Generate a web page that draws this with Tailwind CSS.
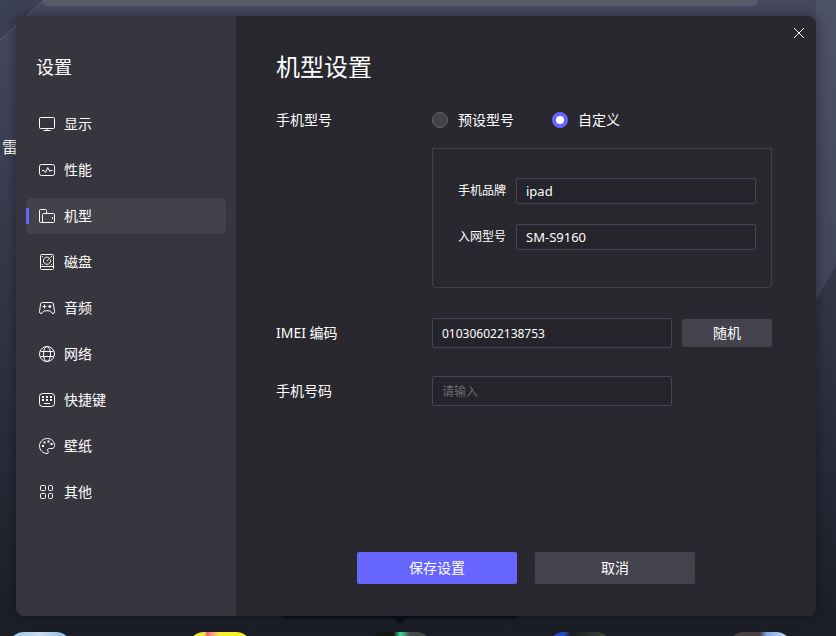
<!DOCTYPE html>
<html lang="zh-CN">
<head>
    <meta charset="UTF-8">
    <meta name="viewport" content="width=device-width, initial-scale=1.0">
    <title>机型设置</title>
    <script src="https://cdn.jsdelivr.net/npm/@tailwindcss/browser@4"></script>
</head>
<body class="relative min-h-screen flex overflow-hidden bg-linear-to-b from-[#474b60] via-[#2c3040] via-60% to-[#1b1e27] font-['Noto_Sans','Noto_Sans_CJK_SC',sans-serif] text-sm text-white">

    <!-- Desktop behind the dialog -->
    <div class="absolute inset-0 overflow-hidden" aria-hidden="true">
        <svg class="absolute left-0 top-0" width="44" height="40" viewBox="0 0 44 40" fill="none">
            <path d="M0 0H44L0 40Z" fill="#363a4d" fill-opacity=".6"/>
            <path d="M44 0L0 40" stroke="#5a5e72"/>
        </svg>
        <svg class="absolute right-0 top-0 h-full" width="20" viewBox="0 0 20 636" preserveAspectRatio="none">
            <path d="M20 0V265L0 300V0Z" fill="#5a5f76" fill-opacity=".4"/>
        </svg>
        <div class="absolute left-[42px] right-[78px] top-0 h-[6px] rounded-b-lg bg-[#595d6b]"></div>
        <span class="absolute left-[2px] top-[135px] text-base leading-6">雷</span>
        <div class="absolute left-[280px] right-[316px] bottom-[17px] h-6 rounded-lg bg-[#101116]"></div>
        <div class="absolute left-[394px] bottom-[13px] h-2 w-3 rounded-b-full bg-[#101116]"></div>
        <div class="absolute -bottom-[60px] left-2 right-11 flex justify-between">
            <div class="size-16 rounded-2xl bg-linear-to-r from-[#8fc4e6] via-[#c9dcf3] to-[#7fb2e4]"></div>
            <div class="size-16 rounded-2xl bg-linear-to-r from-[#f5ee38] from-25% via-[#f0607a] via-30% to-[#f7f12a] to-50%"></div>
            <div class="size-16 rounded-2xl bg-linear-to-r from-[#14170f] from-40% via-[#12e29a] via-50% to-[#45484a] to-65%"></div>
            <div class="size-16 rounded-2xl bg-linear-to-r from-[#1c50c4] from-25% via-[#1c1c22] via-35% to-[#3a4a3a]"></div>
            <div class="size-16 rounded-2xl bg-linear-to-r from-[#4a3f43] from-50% via-[#79a7e8] via-60% to-[#dfe8f5]"></div>
        </div>
    </div>

    <div role="dialog" aria-labelledby="page-title" class="relative flex flex-1 ml-4 mr-5 mt-4 mb-5 min-h-[600px] rounded-lg overflow-hidden shadow-[0_0_14px_rgba(0,0,0,0.4)]">

        <!-- Sidebar -->
        <aside class="w-[220px] shrink-0 bg-[#37363e] pt-9 px-[10px]">
            <h2 class="pl-[10px] text-lg leading-[30px]">设置</h2>
            <nav class="mt-6 flex flex-col gap-[10px]">
                <a href="#" class="flex items-center gap-2 h-9 pl-3 rounded-md">
                    <svg class="size-[18px]" viewBox="0 0 18 18" fill="none" stroke="currentColor">
                        <rect x="1.5" y="2.5" width="15" height="11" rx="1"/>
                        <path d="M9 13.5V15.5M5.5 15.5H12.5"/>
                    </svg>
                    显示
                </a>
                <a href="#" class="flex items-center gap-2 h-9 pl-3 rounded-md">
                    <svg class="size-[18px]" viewBox="0 0 18 18" fill="none" stroke="currentColor" stroke-linejoin="round">
                        <rect x="1.5" y="3.5" width="15" height="11" rx="2"/>
                        <path d="M4 9.5H6L7.5 11.5L9.8 6.5L11.8 10.5L12.5 9.5H14.5"/>
                    </svg>
                    性能
                </a>
                <a href="#" aria-current="page" class="relative flex items-center gap-2 h-9 pl-3 rounded-md bg-[#43424b]">
                    <span class="absolute left-0 top-[10px] h-4 w-[3px] bg-[#6666ff]"></span>
                    <svg class="size-[18px]" viewBox="0 0 18 18" fill="none" stroke="currentColor" stroke-linejoin="round">
                        <path d="M4.5 15.5H2.5Q1.5 15.5 1.5 14.5V3.5Q1.5 2.5 2.5 2.5H7.5Q8.5 2.5 8.5 3.5V6.5"/>
                        <path d="M4.5 15.5V7.5Q4.5 6.5 5.5 6.5H15.5Q16.5 6.5 16.5 7.5V14.5Q16.5 15.5 15.5 15.5Z"/>
                        <path d="M14.5 10V12"/>
                    </svg>
                    机型
                </a>
                <a href="#" class="flex items-center gap-2 h-9 pl-3 rounded-md">
                    <svg class="size-[18px]" viewBox="0 0 18 18" fill="none" stroke="currentColor">
                        <rect x="2.5" y="1.5" width="13" height="15" rx="1"/>
                        <path d="M2.5 13.5H15.5"/>
                        <path d="M10.8 4.6A3.6 3.6 0 1 0 12.4 6.6"/>
                        <path d="M8.8 8.2L12.6 4.2"/>
                        <path d="M4 3.5H5M13 3.5H14M4 11.5H5M13 11.5H14"/>
                    </svg>
                    磁盘
                </a>
                <a href="#" class="flex items-center gap-2 h-9 pl-3 rounded-md">
                    <svg class="size-[18px]" viewBox="0 0 18 18" fill="none" stroke="currentColor" stroke-linejoin="round">
                        <path d="M4.5 3.5H13.5Q15 3.5 15.4 5L16.5 12.5Q16.6 14.5 15 14.5Q13.8 14.5 13.2 13.2Q12.6 11.8 11.2 11.8H6.8Q5.4 11.8 4.8 13.2Q4.2 14.5 3 14.5Q1.4 14.5 1.5 12.5L2.6 5Q3 3.5 4.5 3.5Z"/>
                        <path d="M4.5 7.5H8.5M6.5 5.5V9.5"/>
                        <circle cx="11.8" cy="7.5" r="1.1" fill="currentColor" stroke-width=".8"/>
                    </svg>
                    音频
                </a>
                <a href="#" class="flex items-center gap-2 h-9 pl-3 rounded-md">
                    <svg class="size-[18px]" viewBox="0 0 18 18" fill="none" stroke="currentColor">
                        <circle cx="9" cy="9" r="7.5"/>
                        <ellipse cx="9" cy="9" rx="3.5" ry="7.5"/>
                        <path d="M2.5 6.5H15.5M2.5 11.5H15.5"/>
                    </svg>
                    网络
                </a>
                <a href="#" class="flex items-center gap-2 h-9 pl-3 rounded-md">
                    <svg class="size-[18px]" viewBox="0 0 18 18" fill="none" stroke="currentColor">
                        <rect x="1.5" y="2.5" width="15" height="13" rx="3"/>
                        <path d="M4 6H6M8 6H10M12 6H14M4 9H6M8 9H10M12 9H14" stroke-width="2"/>
                        <path d="M6 12.5H12"/>
                    </svg>
                    快捷键
                </a>
                <a href="#" class="flex items-center gap-2 h-9 pl-3 rounded-md">
                    <svg class="size-[18px]" viewBox="0 0 18 18" fill="none" stroke="currentColor" stroke-linejoin="round">
                        <path d="M9.5 1.5C5 1.5 1.5 4.8 1.5 9C1.5 13.2 5 16.5 9 16.5C10.6 16.5 10.4 15.4 9.9 14.2C9.3 12.6 9.8 11.5 11.5 11.5H14C15.8 11.5 16.5 10.2 16.5 8.5C16.5 4.5 13.5 1.5 9.5 1.5Z"/>
                        <path d="M4 9H6M5.5 5.5H7.5M9.5 4.5H11.5M12.5 7H14.5" stroke-width="2"/>
                    </svg>
                    壁纸
                </a>
                <a href="#" class="flex items-center gap-2 h-9 pl-3 rounded-md">
                    <svg class="size-[18px]" viewBox="0 0 18 18" fill="none" stroke="currentColor">
                        <rect x="2.5" y="2.5" width="5" height="5" rx="1"/>
                        <rect x="10.5" y="2.5" width="4" height="5" rx="1"/>
                        <rect x="2.5" y="10.5" width="5" height="5" rx="1"/>
                        <rect x="10.5" y="10.5" width="4" height="5" rx="1"/>
                    </svg>
                    其他
                </a>
            </nav>
        </aside>

        <!-- Device settings -->
        <main class="relative flex-1 flex flex-col bg-[#29282e] pt-9 pb-8 px-10">
            <button type="button" aria-label="关闭" class="absolute right-2 top-2 size-[18px] grid place-items-center">
                <svg class="size-3" viewBox="0 0 12 12" stroke="currentColor">
                    <path d="M1 1L11 11M11 1L1 11"/>
                </svg>
            </button>

            <h1 id="page-title" class="text-2xl leading-[30px]">机型设置</h1>

            <form class="mt-[26px] flex-1 flex flex-col">
                <fieldset class="flex">
                    <legend class="float-left w-[156px] leading-6">手机型号</legend>
                    <div>
                        <div class="flex items-center gap-[38px] h-6">
                            <label class="flex items-center gap-[10px]">
                                <input type="radio" name="model" class="appearance-none size-4 rounded-full border border-[#66656c] bg-[#434248] checked:border-4 checked:border-[#6666ff] checked:bg-white">
                                预设型号
                            </label>
                            <label class="flex items-center gap-[10px]">
                                <input type="radio" name="model" checked class="appearance-none size-4 rounded-full border border-[#66656c] bg-[#434248] checked:border-4 checked:border-[#6666ff] checked:bg-white">
                                自定义
                            </label>
                        </div>
                        <div class="mt-4 w-[340px] h-[140px] pt-[29px] pl-[25px] pr-[15px] flex flex-col gap-5 rounded-b border border-[#424148] text-xs">
                            <div class="flex items-center gap-[10px]">
                                <label for="brand">手机品牌</label>
                                <input id="brand" type="text" value="ipad" class="flex-1 min-w-0 h-[26px] px-[9px] rounded-xs border border-[#414758] bg-[#25242a] text-[13px]">
                            </div>
                            <div class="flex items-center gap-[10px]">
                                <label for="network-model">入网型号</label>
                                <input id="network-model" type="text" value="SM-S9160" class="flex-1 min-w-0 h-[26px] px-[9px] rounded-xs border border-[#414758] bg-[#25242a] text-[13px]">
                            </div>
                        </div>
                    </div>
                </fieldset>

                <div class="mt-[30px] flex items-center">
                    <label for="imei" class="w-[156px]">IMEI 编码</label>
                    <input id="imei" type="text" value="010306022138753" class="w-[240px] h-[30px] px-[9px] rounded-xs border border-[#414758] bg-[#25242a] text-xs">
                    <button type="button" class="ml-[10px] w-[90px] h-7 rounded-xs bg-[#43424d]">随机</button>
                </div>

                <div class="mt-7 flex items-center">
                    <label for="phone" class="w-[156px]">手机号码</label>
                    <input id="phone" type="text" placeholder="请输入" class="w-[240px] h-[30px] px-[9px] rounded-xs border border-[#414758] bg-[#25242a] text-xs placeholder:text-[#6b6a70]">
                </div>

                <div class="mt-auto flex justify-center gap-[18px]">
                    <button type="submit" class="w-40 h-8 rounded-xs bg-[#6666ff]">保存设置</button>
                    <button type="button" class="w-40 h-8 rounded-xs bg-[#43424d]">取消</button>
                </div>
            </form>
        </main>
    </div>
</body>
</html>
